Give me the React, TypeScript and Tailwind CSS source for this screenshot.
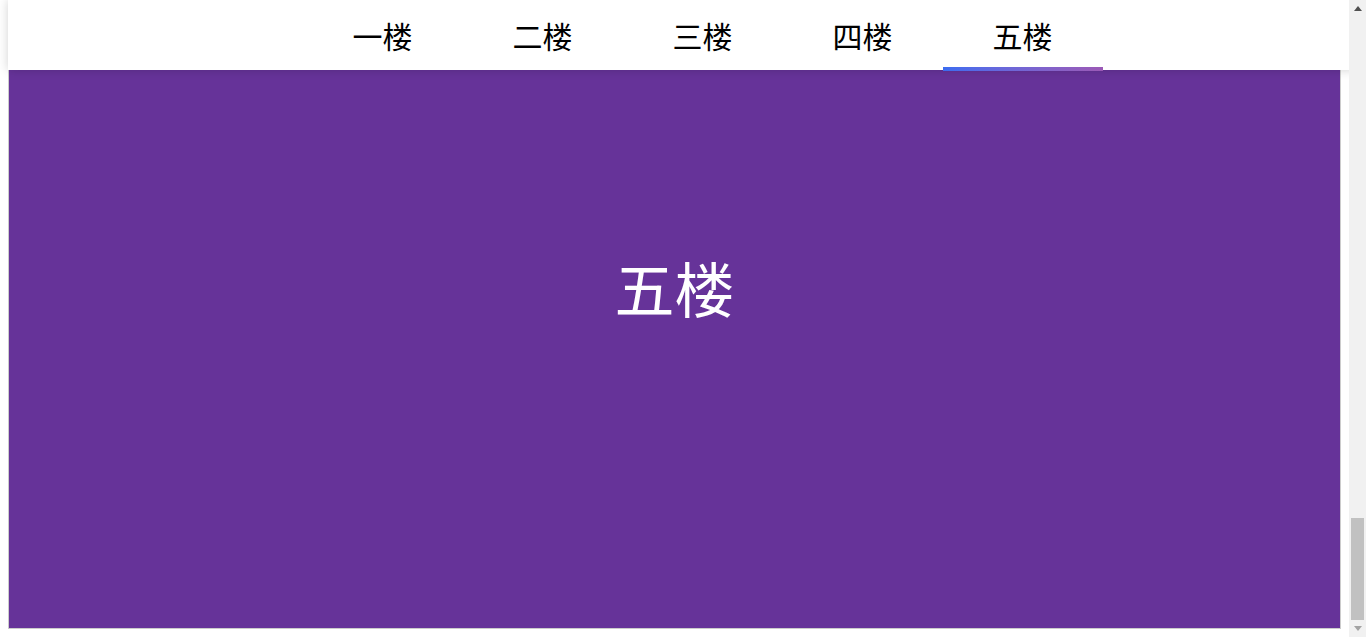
const floors = ["一楼", "二楼", "三楼", "四楼", "五楼"];

function Arrow({ up, color }: { up: boolean; color: string }) {
  return (
    <svg width="8" height="5" viewBox="0 0 8 5" className="block">
      {up ? (
        <polygon points="0,5 8,5 4,0" fill={color} />
      ) : (
        <polygon points="0,0 8,0 4,5" fill={color} />
      )}
    </svg>
  );
}

export default function App() {
  return (
    <div className="flex h-[637px] w-[1366px] overflow-hidden bg-white font-['Noto_Sans_CJK_SC','Noto_Sans',sans-serif]">
      <div className="flex h-full w-[1349px] shrink-0 flex-col overflow-hidden">
        <header className="relative z-10 ml-2 h-[70px] w-[1349px] shrink-0 bg-white shadow-[0_0_10px_rgba(0,0,0,0.18)]">
          <ul className="flex justify-center pl-10">
            {floors.map((f, i) => (
              <li
                key={f}
                className="relative h-[70px] w-[160px] text-center text-[30px] leading-[70px] text-black"
              >
                {f}
                {i === 4 && (
                  <span className="absolute bottom-[-1px] left-0 h-1 w-full bg-linear-to-r from-[#3b6cf0] to-[#9b59b6]" />
                )}
              </li>
            ))}
          </ul>
        </header>
        <main className="mx-2 mb-2 flex flex-1 flex-col items-center border border-t-0 border-[#cccccc] bg-[#663399] pt-[187px]">
          <h1 className="text-[60px] leading-none font-normal text-white">五楼</h1>
        </main>
      </div>
      <div className="flex h-full w-[17px] shrink-0 flex-col bg-[#f1f1f1]">
        <div className="flex h-[17px] items-center justify-center">
          <Arrow up color="#505050" />
        </div>
        <div className="flex flex-1 flex-col justify-end px-[2px]">
          <div className="h-[102px] bg-[#c1c1c1]" />
        </div>
        <div className="flex h-[17px] items-center justify-center">
          <Arrow up={false} color="#a3a3a3" />
        </div>
      </div>
    </div>
  );
}
